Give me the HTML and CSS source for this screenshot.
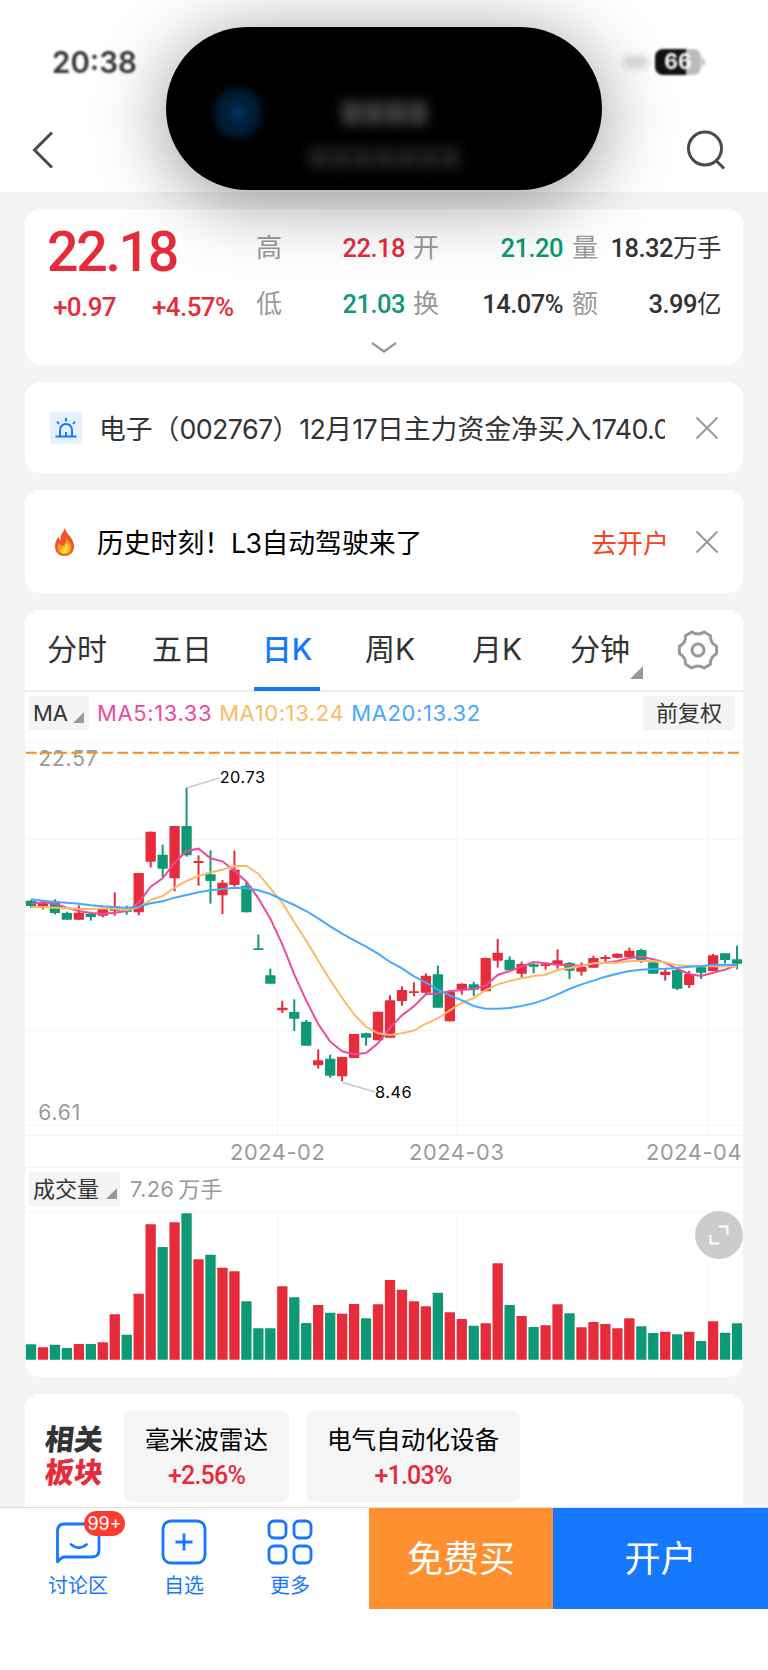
FILE: index.html
```
<!DOCTYPE html>
<html lang="zh-CN">
<head>
    <meta charset="UTF-8">
    <meta name="viewport" content="width=device-width, initial-scale=1.0">
    <title>电子 002767</title>
    <link rel="stylesheet" href="styles.css">
</head>
<body>
    <div class="island">
        <span class="island-icon"></span>
        <div class="island-lines">
            <div class="island-line"><i></i><i></i><i></i><i></i></div>
            <div class="island-line second"><i></i><i></i><i></i><i></i><i></i><i></i><i></i></div>
        </div>
    </div>

    <header class="header">
        <div class="status">
            <span class="time">20:38</span>
            <div class="status-right">
                <span class="signal"></span>
                <span class="battery">66</span>
            </div>
        </div>
        <div class="navbar">
            <svg width="24" height="40" viewBox="0 0 24 40"><path d="M21 2.500L3.500 20L21 37.500" fill="none" stroke="#4a4a4a" stroke-width="3"/></svg>
            <svg width="40" height="42" viewBox="0 0 40 42"><circle cx="19" cy="19.500" r="16.500" fill="none" stroke="#4a4a4a" stroke-width="3"/><path d="M30 31.500l8 8" stroke="#4a4a4a" stroke-width="3"/></svg>
        </div>
    </header>

    <main class="content">
        <section class="card quote">
            <div class="price-block">
                <div class="price">22.18</div>
                <div class="change"><span>+0.97</span><span>+4.57%</span></div>
            </div>
            <div class="stats">
                <span class="label">高</span><span class="num red">22.18</span>
                <span class="label">开</span><span class="num green">21.20</span>
                <span class="label">量</span><span class="num">18.32<b>万手</b></span>
                <span class="label">低</span><span class="num green">21.03</span>
                <span class="label">换</span><span class="num">14.07%</span>
                <span class="label">额</span><span class="num">3.99<b>亿</b></span>
            </div>
            <svg class="more" width="28" height="14" viewBox="0 0 28 14"><path d="M2 2l12 8.500L26 2" fill="none" stroke="#999" stroke-width="2.500"/></svg>
        </section>

        <section class="card notice">
            <svg class="alarm" width="32" height="32" viewBox="0 0 32 32">
                <rect width="32" height="32" rx="4" fill="#e6f1ff"/>
                <g fill="none" stroke="#1677ff" stroke-width="2">
                    <path d="M5.500 24.500h21M10 24.500v-6.500a6 6 0 0 1 12 0v6.500M16 6v3.500M7 9.500l2 2.500M25 9.500l-2 2.500"/>
                    <path d="M16 20v4"/>
                </g>
            </svg>
            <div class="notice-text">电子（<em>002767</em>）<em>12</em>月<em>17</em>日主力资金净买入<em>1740.0</em></div>
            <svg class="close" width="24" height="24" viewBox="0 0 24 24"><path d="M1.500 1.500l21 21M22.500 1.500l-21 21" stroke="#999" stroke-width="2"/></svg>
        </section>

        <section class="card notice tall">
            <svg class="fire" width="32" height="28" viewBox="0 0 32 28">
                <path d="M16 0C17 6 25 10 25 18.500C25 24 21 28 15.500 28S6 24 6 18.500C6 14 8 11 9.500 8.500C9.800 11 10.500 12 11.500 12.500C11 7 14 5 16 0Z" fill="#f0502a"/>
                <path d="M17.500 8C17.500 12 22.500 14 22.500 19.500C22.500 24 19.500 26.500 15.500 26.500S8.500 23.500 8.500 19.500C8.500 17.500 9.500 16 10.500 15C11 17 12 17.500 13.500 17.500C17 16 17.500 12 17.500 8Z" fill="#ff9a1f"/>
                <path d="M17 14.500C19 17 20.500 18 20 21.500C19.500 24.500 17.500 25.500 15.500 25.500S11.500 24 11.500 21C14 21.500 17 19 17 14.500Z" fill="#ffdc3c"/>
            </svg>
            <div class="notice-text dark">历史时刻！<em>L3</em>自动驾驶来了</div>
            <a class="open-link">去开户</a>
            <svg class="close" width="24" height="24" viewBox="0 0 24 24"><path d="M1.500 1.500l21 21M22.500 1.500l-21 21" stroke="#999" stroke-width="2"/></svg>
        </section>

        <section class="card chart">
            <nav class="tabs">
                <span>分时</span>
                <span>五日</span>
                <span class="active">日K</span>
                <span>周K</span>
                <span>月K</span>
                <span class="has-arrow">分钟</span>
                <svg class="gear" width="42" height="42" viewBox="0 0 42 42" fill="none" stroke="#999" stroke-width="3" stroke-linejoin="round">
                    <path d="M27.200 3L33.500 6.700Q33 14 39.600 17.400V24.600Q33 28 33.500 35.300L27.200 39Q21 35 14.800 39L8.500 35.300Q9 28 2.400 24.600V17.400Q9 14 8.500 6.700L14.800 3Q21 7 27.200 3Z"/>
                    <circle cx="21" cy="21" r="6"/>
                </svg>
            </nav>
            <div class="ma-row">
                <span class="tag tag-ma">MA</span>
                <span class="ma5">MA5:13.33</span>
                <span class="ma10">MA10:13.24</span>
                <span class="ma20">MA20:13.32</span>
                <span class="adjust">前复权</span>
            </div>
            <svg id="kline" class="kline" width="718" height="405" viewBox="0 0 2154 1215"></svg>
            <div class="dates"><span>2024-02</span><span>2024-03</span><span>2024-04</span></div>
            <div class="vol-row">
                <span class="tag tag-vol">成交量</span>
                <span class="vol-value"><em>7.26</em>万手</span>
            </div>
            <div class="vol-plot">
                <svg id="volume" width="718" height="149" viewBox="0 0 2154 447"></svg>
                <span class="expand"><svg width="20" height="20" viewBox="0 0 20 20"><path d="M10 1.500h8.500V10M1.500 10v8.500H10" fill="none" stroke="#fff" stroke-width="2"/></svg></span>
            </div>
        </section>

        <section class="card sectors">
            <div class="sector-title"><span>相关</span><span class="red">板块</span></div>
            <div class="chip"><span>毫米波雷达</span><b>+2.56%</b></div>
            <div class="chip wide"><span>电气自动化设备</span><b>+1.03%</b></div>
        </section>
    </main>

    <footer class="footer">
        <div class="tools">
            <div class="tool">
                <svg width="46" height="46" viewBox="0 0 46 46" fill="none" stroke="#1677ff" stroke-width="2.800" stroke-linejoin="round" stroke-linecap="round"><path d="M2.500 43V12Q2.500 5 9.500 5H37Q44 5 44 12V31Q44 38 37 38H9Q6 38.500 2.500 43Z"/><path d="M16 25.500q8 6.500 15.500 0"/></svg>
                <span>讨论区</span>
                <i class="badge">99+</i>
            </div>
            <div class="tool">
                <svg width="46" height="46" viewBox="0 0 46 46" fill="none" stroke="#1677ff" stroke-width="2.800"><rect x="2" y="2" width="42" height="42" rx="8"/><path d="M23 14.500v17M14.500 23h17"/></svg>
                <span>自选</span>
            </div>
            <div class="tool">
                <svg width="46" height="46" viewBox="0 0 46 46" fill="none" stroke="#1677ff" stroke-width="2.800"><rect x="2" y="2" width="17" height="17" rx="5"/><rect x="27" y="2" width="17" height="17" rx="5"/><rect x="2" y="27" width="17" height="17" rx="5"/><rect x="27" y="27" width="17" height="17" rx="5"/></svg>
                <span>更多</span>
            </div>
        </div>
        <div class="btn free">免费买</div>
        <div class="btn open">开户</div>
    </footer>

    <script>
        // each candle: [high, body top, body bottom, low, color, volume]
        const candles = [
            [510,512,528,533,'g',46],[514,520,529,538,'r',37],[508,514,549,553,'g',45],[545,549,569,569,'g',35],
            [526,548,569,569,'r',47],[545,551,561,572,'g',47],[535,537,557,562,'r',52],[487,528,542,557,'r',136],
            [527,540,545,554,'g',75],[429,429,547,556,'r',198],[305,305,395,412,'r',406],[344,374,416,440,'g',338],
            [288,288,445,484,'r',412],[173,288,376,380,'g',439],[376,393,399,467,'r',301],[361,433,453,521,'g',315],
            [450,458,496,552,'r',276],[362,419,465,470,'r',265],[455,467,547,547,'g',175],[614,655,660,660,'g',94],
            [716,736,761,761,'g',94],[812,833,841,849,'r',220],[808,846,866,903,'g',187],[870,875,947,947,'g',110],
            [958,991,1006,1016,'r',164],[974,986,1037,1043,'g',141],[980,981,1039,1054,'r',138],[912,912,984,984,'r',167],
            [908,910,923,947,'g',124],[845,845,931,931,'r',166],[796,811,923,923,'r',239],[769,780,813,827,'r',210],
            [757,784,789,799,'r',175],[730,737,788,792,'r',160],[707,733,833,833,'g',201],[780,785,874,874,'r',142],
            [760,761,779,794,'r',122],[756,763,779,798,'g',102],[683,684,784,784,'r',109],[627,668,692,713,'r',289],
            [679,689,721,721,'g',164],[695,702,731,743,'r',131],[700,703,710,730,'g',98],[697,703,708,719,'r',103],
            [658,691,703,716,'r',166],[696,699,722,747,'g',139],[697,711,725,737,'r',97],[677,684,713,713,'r',113],
            [675,681,687,696,'r',107],[670,671,683,685,'r',94],[653,662,682,682,'r',124],[656,660,691,699,'g',100],
            [694,697,731,731,'g',80],[716,725,735,752,'r',84],[716,720,776,780,'g',76],[723,732,765,774,'r',84],
            [710,712,728,747,'g',56],[672,676,723,723,'r',115],[669,670,690,700,'g',81],[647,688,701,718,'g',109]
        ];
        const ma5 = [521,517,522,533,543,549,551,548,543,518,470,445,398,363,356,385,394,422,455,505,566,643,733,812,882,935,964,973,969,940,893,856,829,793,790,784,780,777,767,735,723,710,696,700,704,706,707,702,698,693,684,680,688,698,717,732,738,728,719,705];
        const ma10 = [531,531,533,535,537,537,535,536,540,532,510,498,473,453,438,427,419,408,408,431,475,518,577,632,692,750,804,853,890,910,915,910,902,881,865,841,818,804,780,763,753,745,738,734,720,714,708,700,698,698,694,692,694,697,706,707,708,709,709,710];
        const ma20 = [508,512,516,518,521,526,529,531,534,530,520,514,503,495,487,481,477,473,474,481,492,509,525,543,565,589,611,631,650,671,696,715,739,758,779,796,811,828,836,836,834,828,820,808,793,777,763,752,740,731,723,719,717,716,714,710,709,704,704,705];
        const colors = { r: '#e62c3b', g: '#0e9976' };
        const months = [757, 1296, 2050];
        const cx = i => 18 + i * 35.9;

        function drawKline() {
            let s = '';
            [38, 327, 613, 901, 1186].forEach(y => s += `<path class="grid" d="M0 ${y}H2154"/>`);
            months.forEach(x => s += `<path class="grid" d="M${x} 12V1215"/>`);
            s += '<text class="scale" x="40" y="107">22.57</text><text class="scale" x="40" y="1171">6.61</text>';
            s += '<path class="limit" d="M2 68H2154"/>';
            candles.forEach(([high, top, bottom, low, c], i) => {
                s += `<path d="M${cx(i)} ${high}V${low}" stroke="${colors[c]}" stroke-width="6"/>`;
                s += `<rect x="${cx(i) - 15.5}" y="${top}" width="31" height="${bottom - top}" rx="2" fill="${colors[c]}"/>`;
            });
            [[ma5, '#ed4a9b'], [ma10, '#f9bb69'], [ma20, '#45a9ff']].forEach(([line, color]) => {
                const points = line.map((y, i) => `${cx(i)},${y}`).join(' ');
                s += `<polyline points="${points}" fill="none" stroke="${color}" stroke-width="6"/>`;
            });
            s += '<path class="pointer" d="M485 174L583 144M952 1057L1050 1086"/>';
            s += '<text class="mark" x="584" y="160">20.73</text><text class="mark" x="1050" y="1105">8.46</text>';
            document.getElementById('kline').innerHTML = s;
        }

        function drawVolume() {
            let s = '<path class="grid" d="M0 1H2154"/>';
            months.forEach(x => s += `<path class="grid" d="M${x} 0V446"/>`);
            candles.forEach((c, i) => {
                s += `<rect x="${cx(i) - 15.5}" y="${446 - c[5]}" width="31" height="${c[5]}" rx="2" fill="${colors[c[4]]}"/>`;
            });
            document.getElementById('volume').innerHTML = s;
        }

        drawKline();
        drawVolume();
    </script>
</body>
</html>
```
FILE: styles.css
```
* {
    box-sizing: border-box;
}
body {
    margin: 0;
    width: 768px;
    height: 1670px;
    position: relative;
    display: flex;
    flex-direction: column;
    overflow: hidden;
    background: #f4f4f4;
    color: #333;
    font-family: Inter, "Noto Sans CJK SC", sans-serif;
}
svg {
    display: block;
    flex: none;
}
em, i {
    font-style: normal;
}
.red {
    color: #e62c3b;
}
.green {
    color: #0e9976;
}

/* dynamic island */
.island {
    position: absolute;
    z-index: 5;
    left: 166px;
    top: 27px;
    width: 436px;
    height: 163px;
    border-radius: 82px;
    background: #000;
    box-shadow: 0 10px 75px rgba(0, 0, 0, 0.42);
    display: flex;
    align-items: flex-start;
    padding-top: 62px;
}
.island-icon {
    width: 46px;
    height: 48px;
    margin-left: 49px;
    border-radius: 50%;
    background: radial-gradient(#003a66 10%, #00182d 35%, #002748 70%);
    filter: blur(4px);
}
.island-lines {
    width: 246px;
    display: flex;
    flex-direction: column;
    align-items: center;
    gap: 22px;
    padding-top: 12px;
}
.island-line {
    display: flex;
    gap: 3px;
    filter: blur(6px);
}
.island-line i {
    width: 19px;
    height: 24px;
    background: #3d3d3d;
}
.island-line.second i {
    height: 22px;
    background: #1f1f22;
}

.header {
    flex: none;
    height: 192px;
    background: #fff;
}
.status {
    height: 124px;
    display: flex;
    justify-content: space-between;
    align-items: center;
    padding: 0 67px 0 52px;
    filter: blur(0.8px);
}
.time {
    font-size: 29.5px;
    font-weight: 600;
}
.status-right {
    display: flex;
    align-items: center;
    gap: 6px;
}
.signal {
    width: 26px;
    height: 14px;
    border-radius: 7px;
    background: #ddd;
    filter: blur(3px);
}
.battery {
    width: 46px;
    height: 26px;
    border-radius: 8px;
    background: linear-gradient(90deg, #111 68%, #bbb 68%);
    color: #fff;
    font-size: 21px;
    font-weight: 700;
    line-height: 26px;
    text-align: center;
    position: relative;
}
.battery::after {
    content: "";
    position: absolute;
    right: -4px;
    top: 9px;
    width: 3px;
    height: 8px;
    border-radius: 0 3px 3px 0;
    background: #bbb;
}
.navbar {
    display: flex;
    justify-content: space-between;
    align-items: center;
    padding: 5px 42px 0 31px;
}

.content {
    height: 1315px;
    flex: none;
    padding: 17px 25px 0;
    display: flex;
    flex-direction: column;
    gap: 17px;
    overflow: hidden;
}
.card {
    flex: none;
    background: #fff;
    border-radius: 16px;
}

/* quote */
.quote {
    height: 156px;
    display: grid;
    grid-template-columns: 231px 1fr;
    grid-template-rows: 125px 31px;
    padding-right: 22px;
}
.price-block {
    padding: 9px 0 0 22px;
    color: #e62c3b;
    font-family: Roboto, sans-serif;
    font-weight: 500;
}
.price {
    font-size: 55.5px;
    line-height: 70px;
    letter-spacing: -2.3px;
}
.change {
    display: flex;
    gap: 36px;
    padding: 4px 0 0 6px;
    font-size: 26px;
    line-height: 30px;
    letter-spacing: -0.6px;
}
.stats {
    display: grid;
    grid-template-columns: 27px 122px 8px 27px 123px 9px 27px 1fr;
    grid-template-rows: 56px 56px;
    align-items: baseline;
    padding-top: 18px;
}
.stats .label:nth-child(3), .stats .label:nth-child(9) {
    grid-column: 4;
}
.stats .label:nth-child(5), .stats .label:nth-child(11) {
    grid-column: 7;
}
.stats .label:nth-child(7) {
    grid-column: 1;
}
.label {
    font-family: "Noto Sans CJK SC", sans-serif;
    font-size: 26px;
    line-height: 38px;
    color: #999;
}
.num {
    font-family: Roboto, "Noto Sans CJK SC", sans-serif;
    font-size: 25.5px;
    font-weight: 500;
    line-height: 30px;
    text-align: right;
    letter-spacing: -0.5px;
    white-space: nowrap;
}
.num b {
    font-size: 24.5px;
    font-weight: 400;
    letter-spacing: -0.5px;
}
.more {
    grid-column: 1 / 3;
    margin: 7px 0 0 345px;
}

/* notices */
.notice {
    height: 91px;
    display: flex;
    align-items: center;
    padding: 0 24px 0 25px;
    font-size: 26.8px;
}
.notice.tall {
    height: 103px;
}
.notice-text {
    flex: 1;
    margin-left: 17px;
    margin-right: 30px;
    white-space: nowrap;
    overflow: hidden;
}
.notice-text.dark {
    color: #000;
    margin-left: 16px;
}
.notice em {
    letter-spacing: -0.6px;
}
.fire {
    margin-left: -1px;
}
.open-link {
    color: #f9431f;
    font-size: 26px;
    margin-right: 26px;
}

/* chart card */
.chart {
    height: 767px;
}
.tabs {
    height: 82px;
    border-bottom: 2px solid #eee;
    display: flex;
    align-items: center;
    padding-left: 22px;
    font-size: 30px;
}
.tabs span {
    width: 105px;
    height: 82px;
    line-height: 81px;
    flex: none;
    position: relative;
    text-align: left;
}
.tabs .active {
    width: 66px;
    margin: 0 35px 0 -3px;
    color: #1677ff;
    font-weight: 500;
    text-align: center;
    border-bottom: 4px solid #1677ff;
}
.tabs span:nth-child(4) {
    margin-left: 10px;
}
.tabs span:nth-child(5) {
    margin-left: 2px;
    width: 98px;
}
.has-arrow::after {
    content: "";
    position: absolute;
    left: 60px;
    bottom: 12px;
    border-left: 13px solid transparent;
    border-bottom: 13px solid #999;
}
.gear {
    margin-left: 2px;
}
.ma-row {
    height: 38px;
    display: flex;
    align-items: center;
    padding: 4px 8px 0 4px;
    gap: 7px;
    font-size: 22px;
    letter-spacing: 0.6px;
    white-space: nowrap;
}
.tag {
    height: 34px;
    line-height: 34px;
    background: #f4f4f4;
    display: flex;
    align-items: center;
    font-size: 22px;
}
.tag::after {
    content: "";
    margin: 8px 0 0 auto;
    border-left: 11px solid transparent;
    border-bottom: 11px solid #999;
}
.tag-ma {
    width: 60px;
    padding: 0 5px 0 4px;
    letter-spacing: 0;
}
.ma5 {
    color: #ed4a9b;
    margin-left: 1px;
}
.ma10 {
    color: #f9bb69;
}
.ma20 {
    color: #45a9ff;
}
.adjust {
    width: 92px;
    height: 34px;
    line-height: 34px;
    margin-left: auto;
    border-radius: 4px;
    background: #f4f4f4;
    text-align: center;
    letter-spacing: 0;
}
.grid {
    stroke: #f5f5f5;
    stroke-width: 3;
}
.limit {
    stroke: #f98c1b;
    stroke-width: 6;
    stroke-dasharray: 33 12.8;
}
.pointer {
    stroke: #ccc;
    stroke-width: 5;
}
.scale {
    fill: #999;
    font-size: 63px;
    letter-spacing: 2.5px;
}
.mark {
    fill: #000;
    font-size: 49px;
    letter-spacing: 1.5px;
}
.dates {
    height: 33px;
    border-top: 1px solid #f5f5f5;
    border-bottom: 1px solid #f5f5f5;
    display: flex;
    align-items: center;
    padding-left: 205px;
    color: #999;
    font-size: 21.8px;
    letter-spacing: 0.6px;
}
.dates span {
    width: 179px;
}
.dates span:nth-child(2) {
    width: 237px;
}
.dates span:nth-child(3) {
    width: auto;
}
.vol-row {
    height: 43px;
    display: flex;
    align-items: flex-start;
    padding: 4px 0 0 4px;
    font-size: 22px;
}
.tag-vol {
    width: 91px;
    padding: 0 3px 0 4px;
}
.vol-value {
    margin-left: 10px;
    line-height: 34px;
    color: #999;
}
.vol-value em {
    margin-right: 4px;
    letter-spacing: 0.3px;
}
.vol-plot {
    position: relative;
}
.expand {
    position: absolute;
    right: 0;
    top: 0;
    width: 48px;
    height: 48px;
    border-radius: 50%;
    background: #ccc;
    display: flex;
    align-items: center;
    justify-content: center;
}

/* related sectors */
.sectors {
    height: 140px;
    display: flex;
    padding: 17px 0 0 20px;
}
.sector-title {
    width: 62px;
    margin-right: 17px;
    display: flex;
    flex-direction: column;
    padding-top: 12px;
    font-size: 29px;
    font-weight: 900;
    line-height: 33px;
}
.sector-title span {
    transform: skewX(-6deg);
}
.chip {
    width: 165px;
    height: 91px;
    margin-right: 17px;
    border-radius: 8px;
    background: #f5f5f5;
    color: #000;
    display: flex;
    flex-direction: column;
    align-items: center;
    font-size: 24.6px;
    line-height: 36px;
    padding-top: 11px;
}
.chip.wide {
    width: 214px;
}
.chip b {
    color: #e62c3b;
    font-family: Roboto, sans-serif;
    font-size: 25px;
    font-weight: 500;
    letter-spacing: -0.8px;
    line-height: 35px;
}

/* bottom bar */
.footer {
    flex: none;
    height: 163px;
    border-top: 1px solid #ddd;
    background: #fff;
    display: flex;
    align-items: flex-start;
    position: relative;
}
.tools {
    width: 369px;
    display: flex;
    padding: 11px 0 0 25px;
}
.tool {
    width: 106px;
    display: flex;
    flex-direction: column;
    align-items: center;
    position: relative;
    color: #1677ff;
    font-size: 20px;
    line-height: 24px;
    gap: 9px;
}
.badge {
    position: absolute;
    left: 59px;
    top: -8px;
    width: 41px;
    height: 25px;
    border-radius: 13px;
    background: #ff3b30;
    color: #fff;
    font-size: 18px;
    line-height: 26px;
    text-align: center;
}
.btn {
    height: 101px;
    line-height: 103px;
    color: #fff;
    font-size: 36px;
    text-align: center;
}
.free {
    width: 184px;
    background: #ff9030;
}
.open {
    width: 215px;
    background: #1677ff;
}
```
